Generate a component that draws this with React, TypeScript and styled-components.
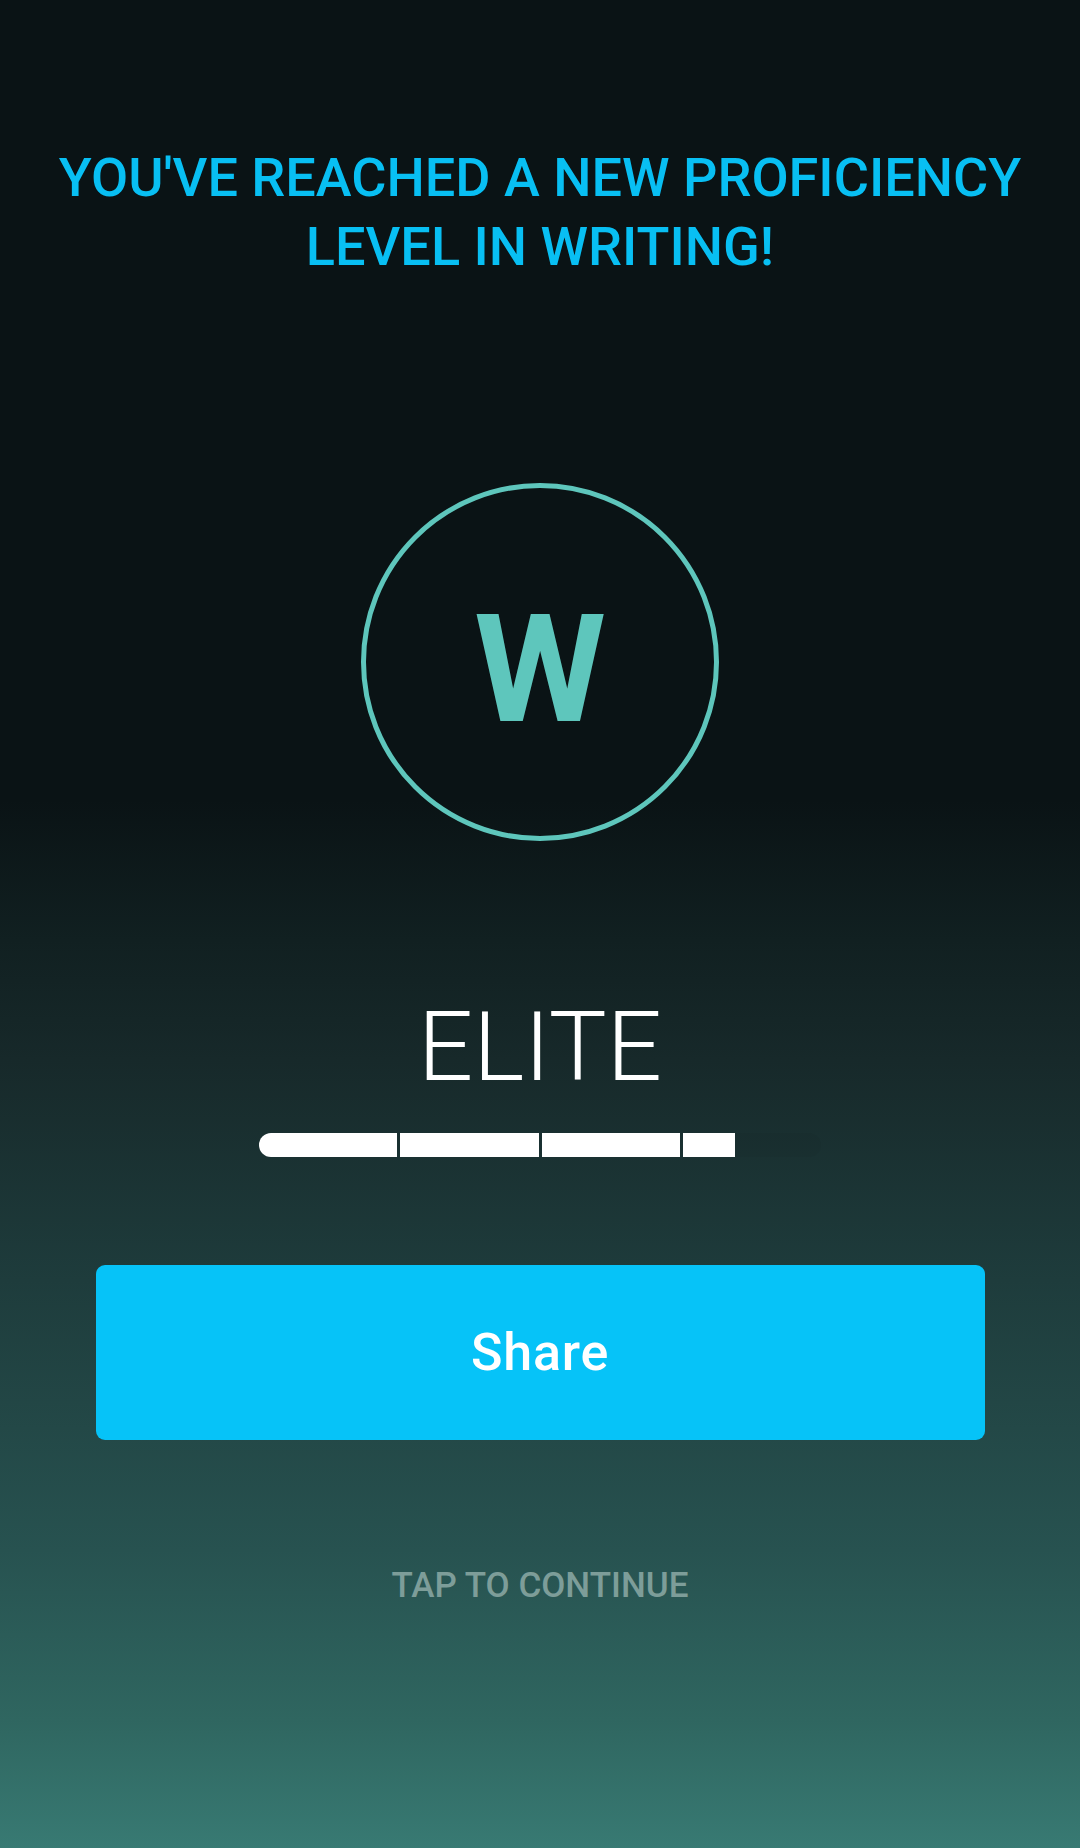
import React from "react";
import styled, { createGlobalStyle } from "styled-components";

const GlobalStyle = createGlobalStyle`
  html, body {
    margin: 0;
    padding: 0;
    background: #0a1315;
  }
  * { box-sizing: border-box; }
`;

const Screen = styled.main`
  width: 1080px;
  min-height: 1848px;
  display: flex;
  flex-direction: column;
  align-items: center;
  font-family: Roboto, "Noto Sans", sans-serif;
  background: linear-gradient(
    to bottom,
    #0a1315 0px,
    #0a1315 800px,
    #112021 940px,
    #17292a 1060px,
    #1e3c3c 1280px,
    #275250 1550px,
    #2f6660 1720px,
    #387a73 1848px
  );
`;

const Title = styled.h1`
  margin: 143px 0 0;
  font-size: 54px;
  line-height: 69px;
  font-weight: 500;
  letter-spacing: 0px;
  color: #08bff3;
  text-align: center;
  text-transform: uppercase;
`;

const Badge = styled.div`
  margin-top: 202px;
  width: 358px;
  height: 358px;
  border-radius: 50%;
  border: 5px solid #5ec6bc;
  display: flex;
  align-items: center;
  justify-content: center;
  padding-top: 15px;
`;

const BadgeLetter = styled.span`
  font-size: 151px;
  line-height: 1;
  font-weight: 700;
  color: #5ec6bc;
`;

const Level = styled.div`
  margin-top: 158px;
  font-size: 97px;
  line-height: 96px;
  font-weight: 300;
  color: #ffffff;
`;

const Progress = styled.div`
  margin-top: 38px;
  width: 562px;
  height: 24px;
  display: grid;
  grid-template-columns: repeat(4, 1fr);
  gap: 3px;
  border-radius: 12px;
  overflow: hidden;
`;

const Segment = styled.div`
  height: 100%;
  background: rgba(0, 0, 0, 0.035);
  display: flex;
`;

const SegmentFill = styled.div`
  height: 100%;
  background: #ffffff;
`;

const ShareButton = styled.button`
  margin-top: 108px;
  width: 889px;
  height: 175px;
  border: none;
  border-radius: 9px;
  background: #06c3f8;
  color: #ffffff;
  font-family: Roboto, "Noto Sans", sans-serif;
  font-size: 52px;
  font-weight: 500;
  letter-spacing: 0.8px;
  display: flex;
  align-items: center;
  justify-content: center;
  cursor: pointer;
`;

const Continue = styled.div`
  margin-top: 128px;
  font-size: 35px;
  line-height: 35px;
  font-weight: 500;
  color: #7d9d99;
  text-transform: uppercase;
`;

const segments = [1, 1, 1, 0.38];

export default function App() {
  return (
    <>
      <GlobalStyle />
      <Screen>
        <Title>
          YOU'VE REACHED A NEW PROFICIENCY
          <br />
          LEVEL IN WRITING!
        </Title>
        <Badge>
          <BadgeLetter>W</BadgeLetter>
        </Badge>
        <Level>ELITE</Level>
        <Progress>
          {segments.map((f, i) => (
            <Segment key={i}>
              <SegmentFill style={{ width: `${f * 100}%` }} />
            </Segment>
          ))}
        </Progress>
        <ShareButton>Share</ShareButton>
        <Continue>TAP TO CONTINUE</Continue>
      </Screen>
    </>
  );
}
